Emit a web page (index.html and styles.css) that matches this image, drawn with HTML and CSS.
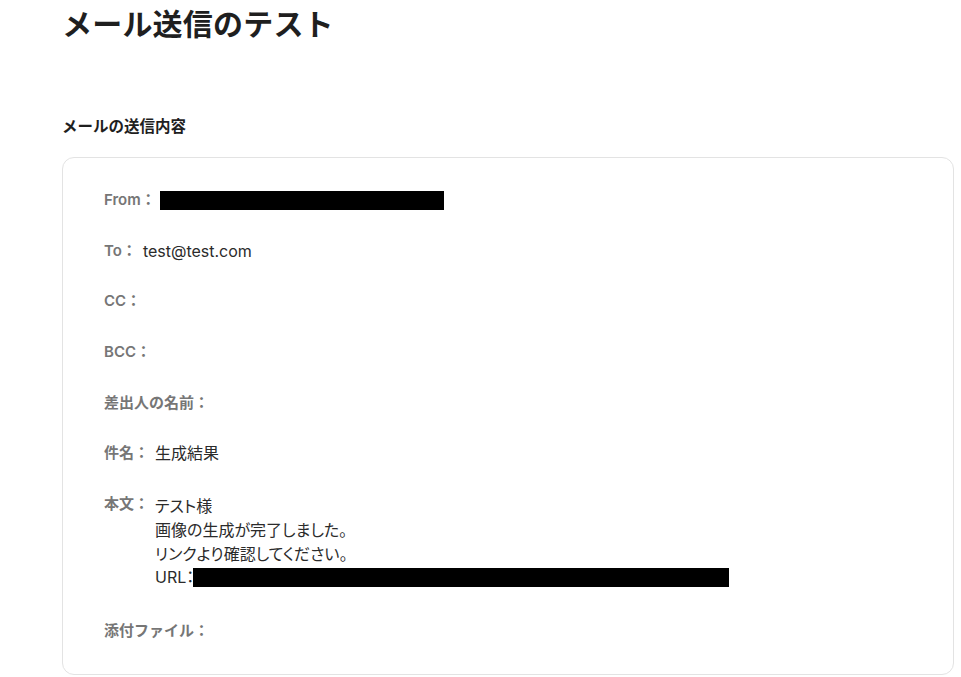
FILE: index.html
```html
<!DOCTYPE html>
<html lang="ja">
<head>
    <meta charset="UTF-8">
    <meta name="viewport" content="width=device-width, initial-scale=1.0">
    <title>メール送信のテスト</title>
    <link rel="stylesheet" href="styles.css">
</head>
<body>
    <div class="page">
        <h1 class="title">メール送信のテスト</h1>

        <h2 class="section-title">メールの送信内容</h2>

        <div class="mail-card">
            <div class="mail-row">
                <span class="label">From：</span>
                <span class="value"><span class="redacted redacted-from"></span></span>
            </div>
            <div class="mail-row">
                <span class="label">To：</span>
                <span class="value">test@test.com</span>
            </div>
            <div class="mail-row">
                <span class="label">CC：</span>
                <span class="value"></span>
            </div>
            <div class="mail-row">
                <span class="label">BCC：</span>
                <span class="value"></span>
            </div>
            <div class="mail-row">
                <span class="label">差出人の名前：</span>
                <span class="value"></span>
            </div>
            <div class="mail-row">
                <span class="label">件名：</span>
                <span class="value">生成結果</span>
            </div>
            <div class="mail-row">
                <span class="label">本文：</span>
                <div class="value body-text">
                    <div>テスト様</div>
                    <div>画像の生成が完了しました。</div>
                    <div>リンクより確認してください。</div>
                    <div>URL：<span class="redacted redacted-url"></span></div>
                </div>
            </div>
            <div class="mail-row">
                <span class="label">添付ファイル：</span>
                <span class="value"></span>
            </div>
        </div>
    </div>
</body>
</html>
```

FILE: styles.css
```css
:root {
    --text-main: #1f1f1f;
    --text-label: #767676;
    --text-value: #2b2b2b;
    --border: #e3e3e3;
}

* {
    margin: 0;
    padding: 0;
    box-sizing: border-box;
}

body {
    background-color: #fff;
    color: var(--text-main);
    font-family: 'Inter', 'Noto Sans CJK JP', sans-serif;
}

.page {
    width: 961px;
    padding: 0 7px 3px 62px;
}

.title {
    font-size: 30px;
    font-weight: 700;
    line-height: 48px;
    color: var(--text-main);
    letter-spacing: 0.2px;
}

.section-title {
    margin-top: 68px;
    font-size: 15.5px;
    font-weight: 700;
    line-height: 22px;
    color: var(--text-main);
}

.mail-card {
    margin-top: 19px;
    border: 1px solid var(--border);
    border-radius: 12px;
    background-color: #fff;
    padding: 30px 41px 31px 41px;
    display: flex;
    flex-direction: column;
    gap: 26.7px;
}

.mail-row {
    display: flex;
    align-items: flex-start;
    font-size: 15px;
    line-height: 24px;
}

.label {
    color: var(--text-label);
    font-weight: 600;
    white-space: nowrap;
}

.value {
    color: var(--text-value);
    font-size: 16px;
    margin-left: 6px;
}

.body-text {
    margin-top: 3px;
    margin-bottom: 2px;
    line-height: 23.7px;
    font-feature-settings: "palt";
}

.redacted {
    display: inline-block;
    background-color: #000;
    vertical-align: middle;
}

.redacted-from {
    width: 284px;
    height: 19px;
    margin-top: -3px;
    margin-left: -2px;
}

.redacted-url {
    width: 536px;
    height: 19px;
    margin-left: -1px;
    margin-top: -3px;
}
```
